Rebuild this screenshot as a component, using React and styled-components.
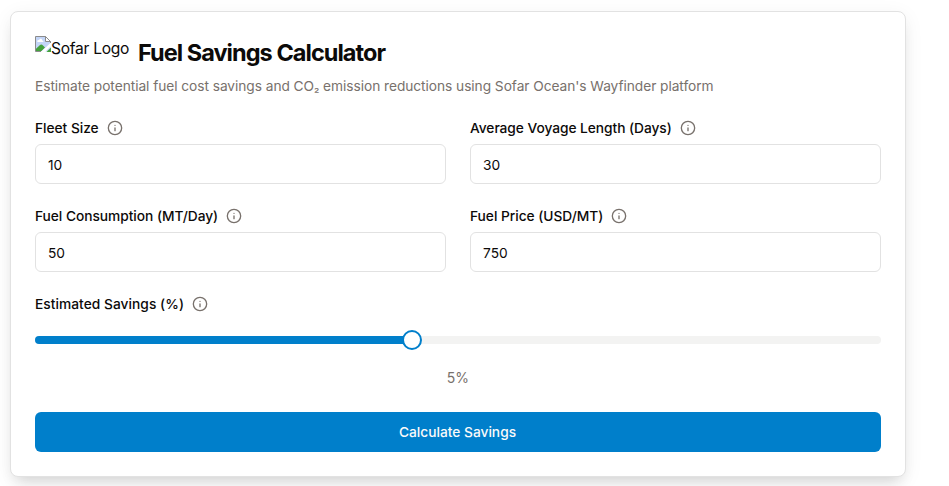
import React from "react";
import styled, { createGlobalStyle } from "styled-components";
import { Info } from "lucide-react";

const Global = createGlobalStyle`
  * { box-sizing: border-box; }
  body { margin: 0; background: #fff; overflow: hidden; font-family: Inter, sans-serif; color: #0c0a09; }
`;
const Page = styled.div`height: 486px; padding: 11px 0 0 10px; overflow: hidden;`;
const Card = styled.main`
  width: 896px; height: 466px; padding: 24px;
  border: 1px solid #e2e2e2; border-radius: 8px; background: #fff;
  box-shadow: 0 4px 20px rgba(0,0,0,.06), 0 10px 15px -6px rgba(0,0,0,.14);
`;
const Heading = styled.header`display: flex; height: 32px; align-items: flex-start;`;
const Logo = styled.div`
  display: flex; flex: none; width: 95px; height: 24px; margin-right: 8px; font-size: 15.6px; line-height: 25px; letter-spacing: -.28px; white-space: nowrap;
  svg { flex: none; }
`;
const Title = styled.h1`margin: 0; font-size: 23.5px; line-height: 34px; font-weight: 700; letter-spacing: -.96px; white-space: nowrap;`;
const Subtitle = styled.p`
  margin: 8px 0 22px; font-size: 13.75px; line-height: 20px; letter-spacing: -.06px; color: #78716c; white-space: nowrap;
`;
const Subscript = styled.span`font-size: 12px; line-height: 1;`;
const Grid = styled.div`display: grid; grid-template-columns: 1fr 1fr; gap: 22px 24px;`;
const Label = styled.label`
  display: flex; align-items: center; gap: 8px; height: 20px; font-size: 13.75px; font-weight: 500; letter-spacing: ${p => p.$tracking || "-.03px"};
  span { line-height: 20px; }
  svg { color: #78716c; }
`;
const Input = styled.input`
  display: block; width: 100%; height: 40px; margin-top: 6px; padding: 1px 12px 0; border: 1px solid #e2e2e2;
  border-radius: 6px; background: #fff; color: #0c0a09; font: 400 13.75px Inter, sans-serif; outline: none;
`;
const SliderSection = styled.section`margin-top: 22px;`;
const Slider = styled.div`position: relative; display: flex; align-items: center; height: 20px; margin-top: 16px;`;
const Track = styled.div`width: 100%; height: 8px; border-radius: 4px; overflow: hidden; background: #f3f3f2;`;
const Fill = styled.div`width: 377px; height: 8px; background: #007fcb;`;
const Thumb = styled.div`position: absolute; left: 367px; width: 20px; height: 20px; border: 2px solid #007fcb; border-radius: 50%; background: white;`;
const Value = styled.div`margin-top: 18px; text-align: center; font-size: 14px; line-height: 20px; color: #78716c;`;
const Button = styled.button`
  display: block; width: 100%; height: 40px; margin-top: 24px; padding: 0 1px 1px 0; border: 0; border-radius: 6px;
  background: #007fcb; color: #fafafa; font: 500 13.75px Inter, sans-serif;
`;

const BrokenImage = () => (
  <svg width="16" height="16" viewBox="0 0 16 16">
    <path d="M.5.5h10l5 5v10H.5z" fill="#c3d5f7" />
    <path d="M1 15v-2.2L5 9q1.5-1 3 .5l2 2L6.5 15z" fill="#43a23c" />
    <path d="M2.5 6c-.8-1.5.6-2.3 1.5-1.8C5 2 7.3 2.8 7.2 4.4 8.5 4.3 8.8 5.5 8 6z" fill="#fff" />
    <path d="M16 6.5V10l-6 6H5.8z" fill="#fff" />
    <path d="M16 11.5V16h-4.5z" fill="#43a23c" />
    <path d="M15.5 7V5.5l-5-5H.5v15H6" fill="none" stroke="#8b8b8b" />
    <path d="M10.5.5v5h5z" fill="#fff" stroke="#8b8b8b" />
  </svg>
);
const Field = ({ label, value, tracking }) => (
  <div><Label $tracking={tracking}><span>{label}</span><Info size={16} /></Label><Input aria-label={label} defaultValue={value} /></div>
);

export default function App() {
  return <><Global /><Page><Card>
    <Heading><Logo><BrokenImage />Sofar Logo</Logo><Title>Fuel Savings Calculator</Title></Heading>
    <Subtitle>Estimate potential fuel cost savings and CO<Subscript>₂</Subscript> emission reductions using Sofar Ocean's Wayfinder platform</Subtitle>
    <Grid>
      <Field label="Fleet Size" value="10" /><Field label="Average Voyage Length (Days)" value="30" tracking="-.05px" />
      <Field label="Fuel Consumption (MT/Day)" value="50" tracking="-.04px" /><Field label="Fuel Price (USD/MT)" value="750" />
    </Grid>
    <SliderSection>
      <Label $tracking=".04px"><span>Estimated Savings (%)</span><Info size={16} /></Label>
      <Slider><Track><Fill /></Track><Thumb role="slider" aria-valuenow={5} /></Slider>
      <Value>5%</Value>
    </SliderSection>
    <Button>Calculate Savings</Button>
  </Card></Page></>;
}
